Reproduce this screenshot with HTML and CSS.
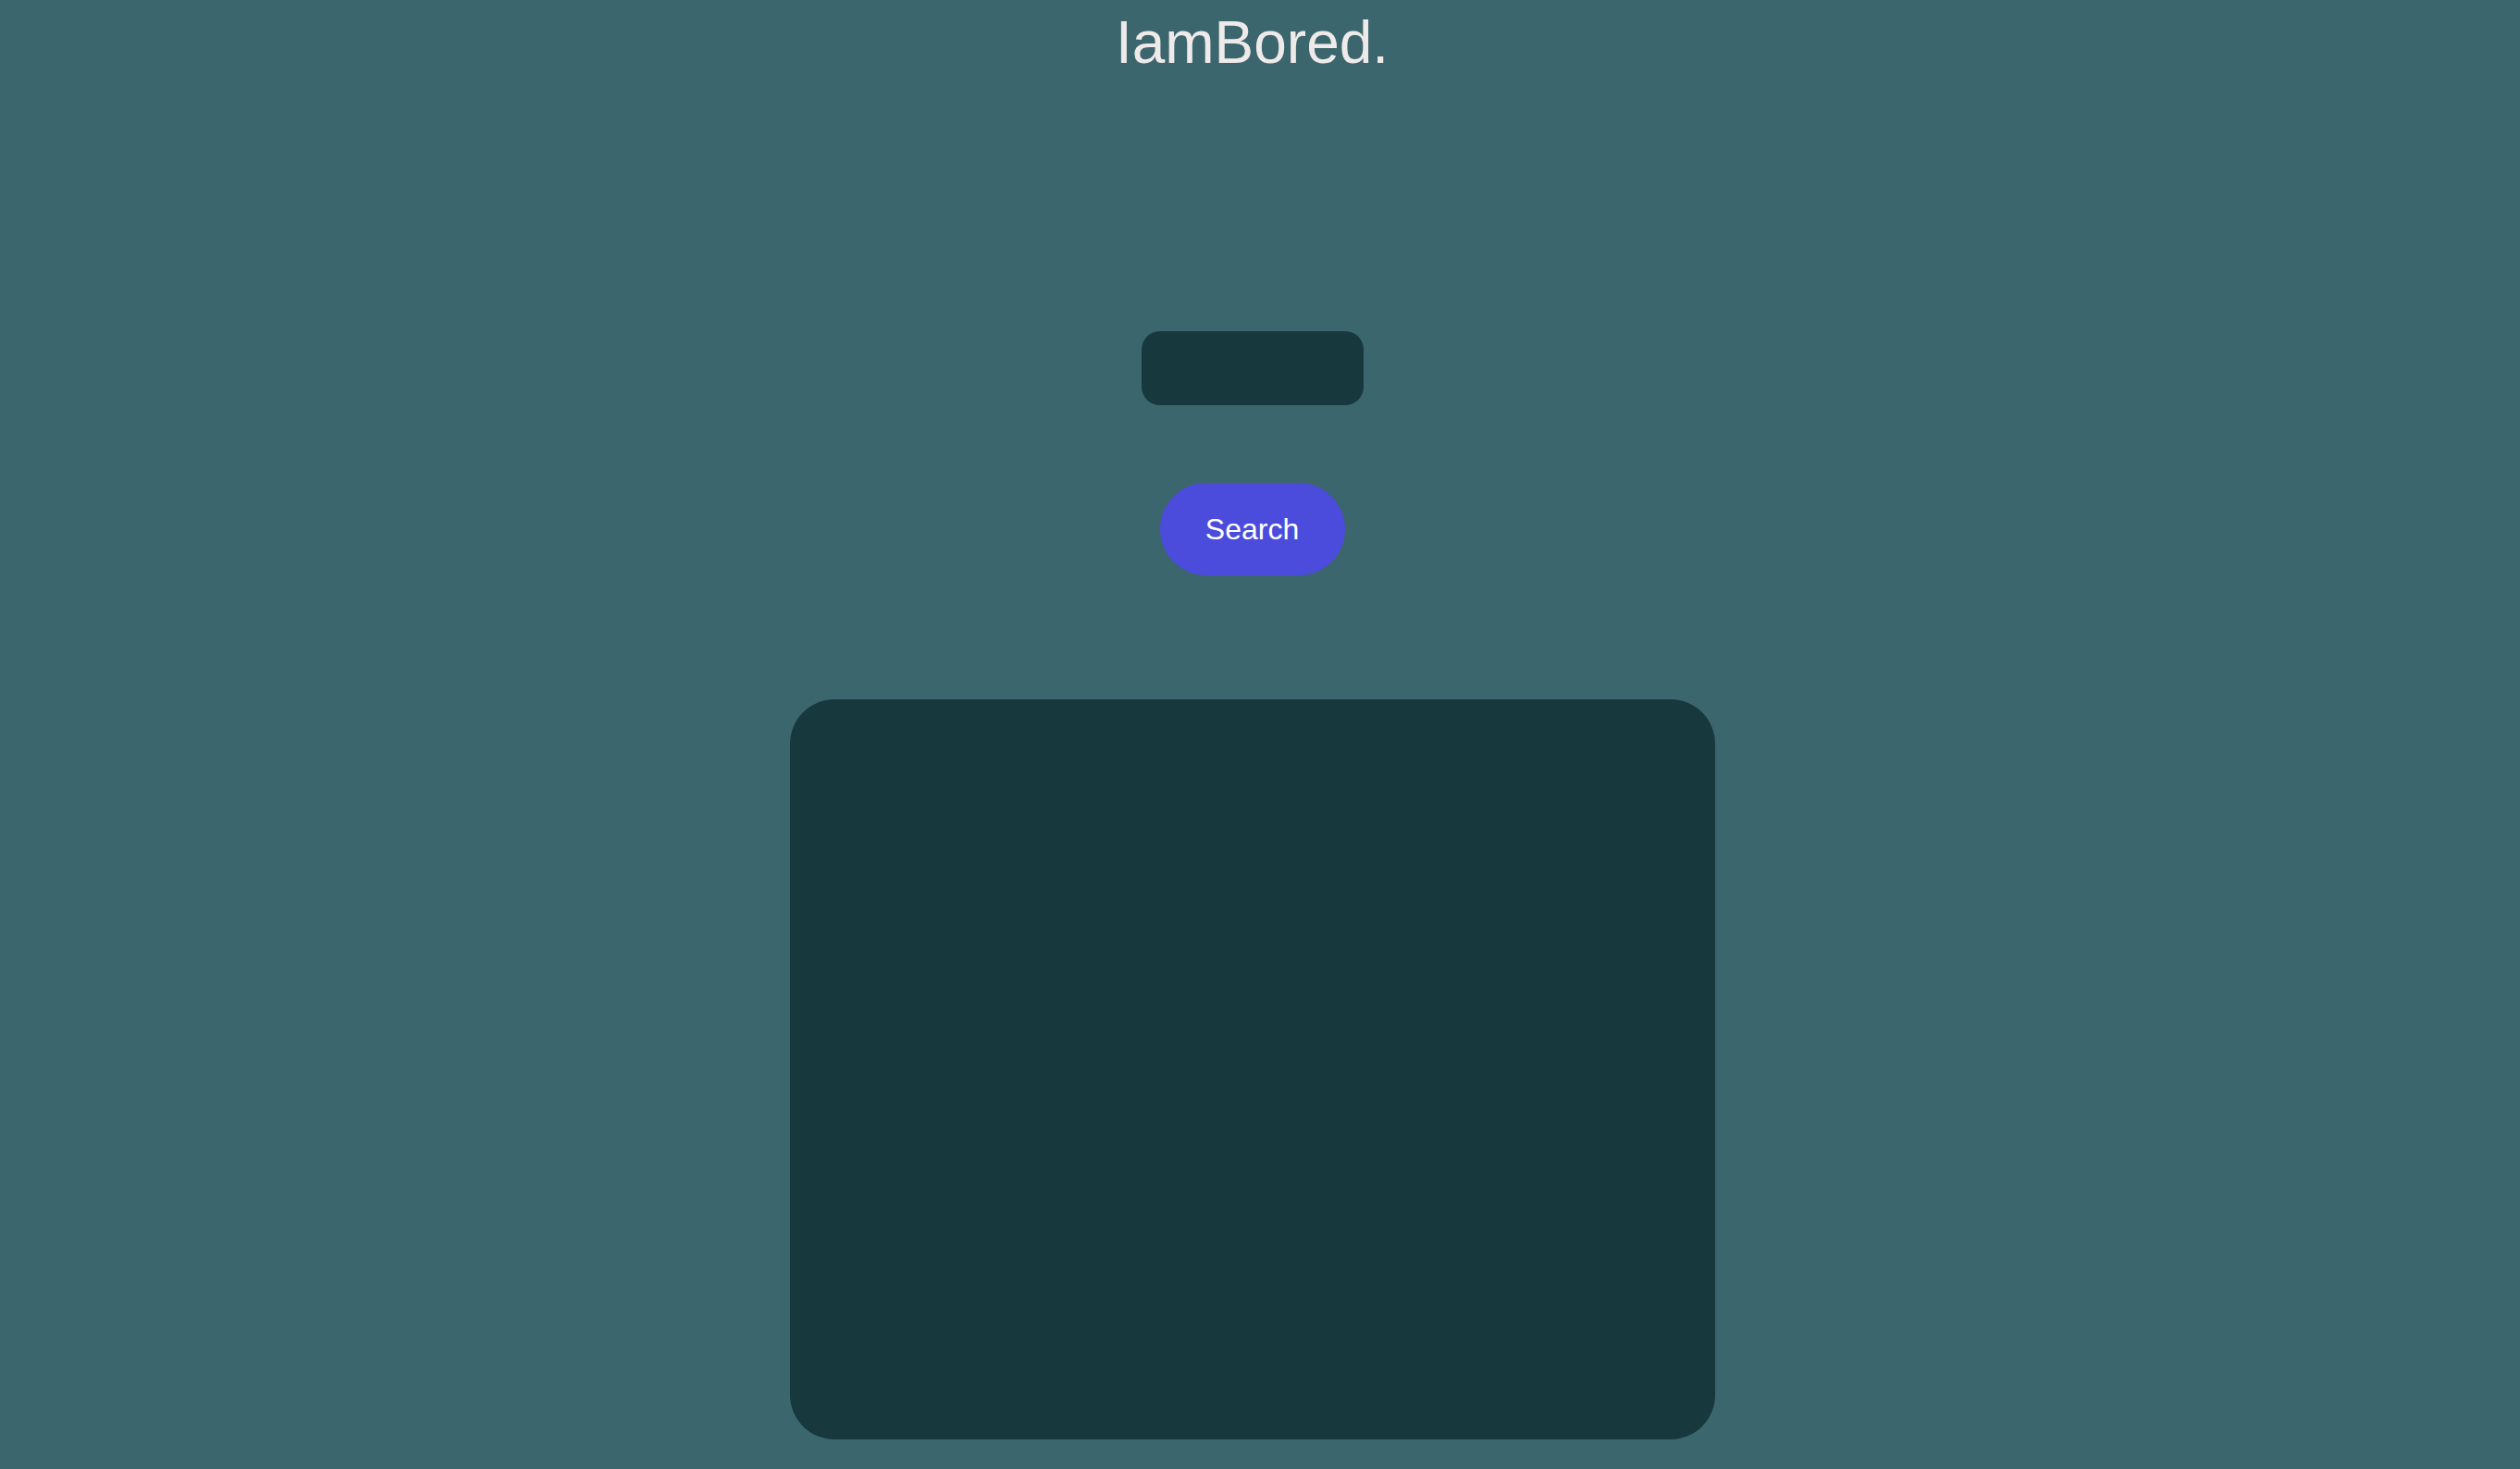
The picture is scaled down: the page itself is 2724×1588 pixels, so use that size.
FILE: index.html
```html
<!DOCTYPE html>
<html lang="en">
<head>
<meta charset="utf-8">
<title>IamBored.</title>
<link rel="stylesheet" href="styles.css">
</head>
<body>
<main class="page">
  <h1 class="title">IamBored.</h1>
  <input class="query" type="text" aria-label="Search">
  <button class="search-btn" type="button">Search</button>
  <section class="result"></section>
</main>
</body>
</html>
```

FILE: styles.css
```css
html, body {
  margin: 0;
  padding: 0;
  background: #3c666d;
  font-family: Helvetica, "Liberation Sans", Arial, sans-serif;
}

.page {
  display: flex;
  flex-direction: column;
  align-items: center;
  padding-right: 17px;
}

.title {
  margin: 6px 0 0;
  font-size: 64px;
  line-height: 80px;
  font-weight: 400;
  color: #efeaea;
}

.query {
  margin-top: 272px;
  width: 240px;
  height: 80px;
  box-sizing: border-box;
  border: none;
  border-radius: 20px;
  background: #17393d;
  outline: none;
  color: #efeaea;
  font-size: 28px;
  padding: 0 20px;
}

.search-btn {
  margin-top: 84px;
  width: 200px;
  height: 100px;
  border: none;
  border-radius: 50px;
  background: #4b4cdb;
  color: #ffffff;
  font-family: Helvetica, "Liberation Sans", Arial, sans-serif;
  font-size: 32px;
  cursor: pointer;
}

.result {
  margin-top: 134px;
  width: 1000px;
  height: 800px;
  border-radius: 48px;
  background: #17393d;
}
```
